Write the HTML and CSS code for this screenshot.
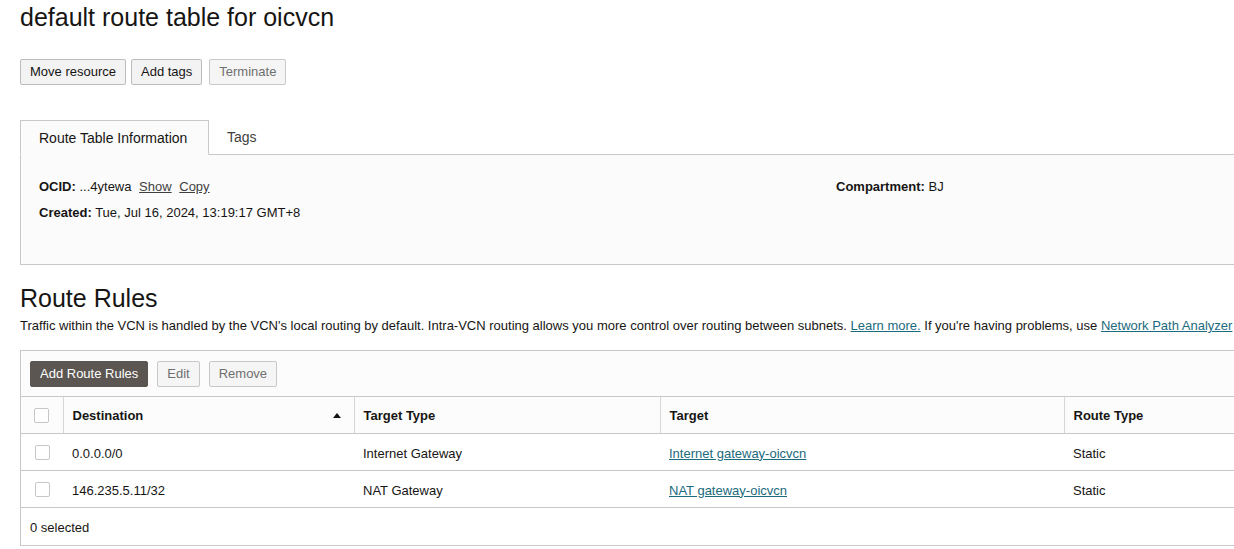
FILE: index.html
```html
<!DOCTYPE html>
<html>
<head>
<meta charset="utf-8">
<link rel="stylesheet" href="styles.css">
</head>
<body>
<div class="page">
  <h1 class="title">default route table for oicvcn</h1>
  <div class="actions">
    <button class="btn">Move resource</button>
    <button class="btn">Add tags</button>
    <button class="btn disabled">Terminate</button>
  </div>

  <div class="tabs">
    <div class="tab active">Route Table Information</div>
    <div class="tab">Tags</div>
    <div class="tab-fill"></div>
  </div>
  <div class="panel">
    <div class="col">
      <div class="kv"><b>OCID:</b> ...4ytewa <a class="plain">Show</a> <a class="plain">Copy</a></div>
      <div class="kv"><b>Created:</b> Tue, Jul 16, 2024, 13:19:17 GMT+8</div>
    </div>
    <div class="col col-right">
      <div class="kv"><b>Compartment:</b> BJ</div>
    </div>
  </div>

  <h2 class="section">Route Rules</h2>
  <p class="desc">Traffic within the VCN is handled by the VCN's local routing by default. Intra-VCN routing allows you more control over routing between subnets. <a class="link">Learn more.</a> If you're having problems, use <a class="link">Network Path Analyzer</a> to troubleshoot.</p>

  <div class="grid">
    <div class="toolbar">
      <button class="btn primary">Add Route Rules</button>
      <button class="btn disabled">Edit</button>
      <button class="btn disabled">Remove</button>
    </div>
    <table class="rules">
      <thead>
        <tr>
          <th class="c-check"><span class="cb"></span></th>
          <th class="c-dest"><div class="th-sort">Destination<span class="arrow"></span></div></th>
          <th class="c-ttype">Target Type</th>
          <th class="c-target">Target</th>
          <th class="c-rtype">Route Type</th>
        </tr>
      </thead>
      <tbody>
        <tr>
          <td class="c-check"><span class="cb"></span></td>
          <td>0.0.0.0/0</td>
          <td>Internet Gateway</td>
          <td><a class="link">Internet gateway-oicvcn</a></td>
          <td>Static</td>
        </tr>
        <tr>
          <td class="c-check"><span class="cb"></span></td>
          <td>146.235.5.11/32</td>
          <td>NAT Gateway</td>
          <td><a class="link">NAT gateway-oicvcn</a></td>
          <td>Static</td>
        </tr>
      </tbody>
    </table>
    <div class="footer">0 selected</div>
  </div>
</div>
</body>
</html>
```

FILE: styles.css
```css
html, body {
  margin: 0;
  padding: 0;
  background: #ffffff;
  overflow: hidden;
}
body {
  font-family: "Liberation Sans", Arial, sans-serif;
  color: #161513;
  font-size: 13px;
}
.page {
  padding-left: 20px;
  width: 1300px;
}
.title {
  margin: 0;
  font-size: 25px;
  font-weight: normal;
  line-height: 34px;
  color: #161513;
}
.actions {
  display: flex;
  gap: 5px;
  margin-top: 25px;
}
.btn {
  font-family: "Liberation Sans", Arial, sans-serif;
  font-size: 13px;
  height: 26px;
  padding: 0 9px;
  border: 1px solid #bcbcbc;
  border-radius: 2px;
  background: #f3f3f3;
  color: #161513;
  line-height: 24px;
}
.actions .btn:nth-child(3) { margin-left: 2px; }
.btn.disabled {
  color: #6f6f6f;
  background: #f5f5f5;
  border-color: #c8c8c8;
}
.btn.primary {
  background: #5b5652;
  border-color: #5b5652;
  color: #ffffff;
}
.tabs {
  display: flex;
  margin-top: 35px;
  height: 35px;
}
.tab {
  box-sizing: border-box;
  height: 35px;
  font-size: 14px;
  line-height: 34px;
  padding: 0 18px;
  border-bottom: 1px solid #c8c8c8;
  color: #3f3f3f;
}
.tab.active {
  width: 189px;
  border: 1px solid #c8c8c8;
  border-bottom: 1px solid #fbfbfb;
  background: #fbfbfb;
  color: #161513;
}
.tab-fill {
  flex: 1;
  border-bottom: 1px solid #c8c8c8;
}
.panel {
  box-sizing: border-box;
  height: 110px;
  background: #fbfbfb;
  border: 1px solid #c8c8c8;
  border-top: none;
  display: flex;
  padding: 24px 18px 0;
}
.col {
  width: 797px;
}
.col-right {
  width: 400px;
}
.kv {
  font-size: 13px;
  line-height: 15px;
  margin-bottom: 11px;
}
.kv b {
  font-weight: bold;
}
.plain {
  color: #3f3f3f;
  text-decoration: underline;
  margin-left: 4px;
}
.section {
  margin: 19px 0 0;
  font-size: 25px;
  font-weight: normal;
  line-height: 28px;
}
.desc {
  margin: 6px 0 0;
  white-space: nowrap;
  line-height: 16px;
  font-size: 13px;
}
.link {
  color: #1b6a7d;
  text-decoration: underline;
}
.grid {
  margin-top: 16px;
  border: 1px solid #c8c8c8;
  border-right: none;
  background: #fcfcfc;
}
.toolbar {
  display: flex;
  gap: 9px;
  padding: 10px 9px 9px;
}
.rules {
  border-collapse: collapse;
  width: 1260px;
  table-layout: fixed;
}
.rules th, .rules td {
  box-sizing: border-box;
  height: 37px;
  text-align: left;
  padding: 0 9px;
  font-size: 13px;
  border-top: 1px solid #c8c8c8;
  border-bottom: 1px solid #c8c8c8;
}
.rules td {
  padding-top: 2px;
}
.rules th {
  font-weight: bold;
  font-size: 13px;
  background: #fcfcfc;
  border-left: 1px solid #d6d6d6;
}
.rules th:first-child { border-left: none; }
.rules td {
  background: #ffffff;
}
.c-check { width: 42px; text-align: center !important; padding: 0 !important; }
.c-dest { width: 291px; }
.c-ttype { width: 306px; }
.c-target { width: 404px; }
.c-rtype { width: 217px; }
.cb {
  display: inline-block;
  width: 13px;
  height: 13px;
  border: 1px solid #c6c6c6;
  border-radius: 2px;
  background: #ffffff;
  vertical-align: middle;
}
.th-sort {
  display: flex;
  justify-content: space-between;
  align-items: center;
  padding-right: 4px;
}
.arrow {
  width: 0;
  height: 0;
  border-left: 4px solid transparent;
  border-right: 4px solid transparent;
  border-bottom: 5px solid #161513;
}
.footer {
  height: 37px;
  line-height: 39px;
  padding-left: 9px;
  font-size: 13px;
  background: #ffffff;
}
```
